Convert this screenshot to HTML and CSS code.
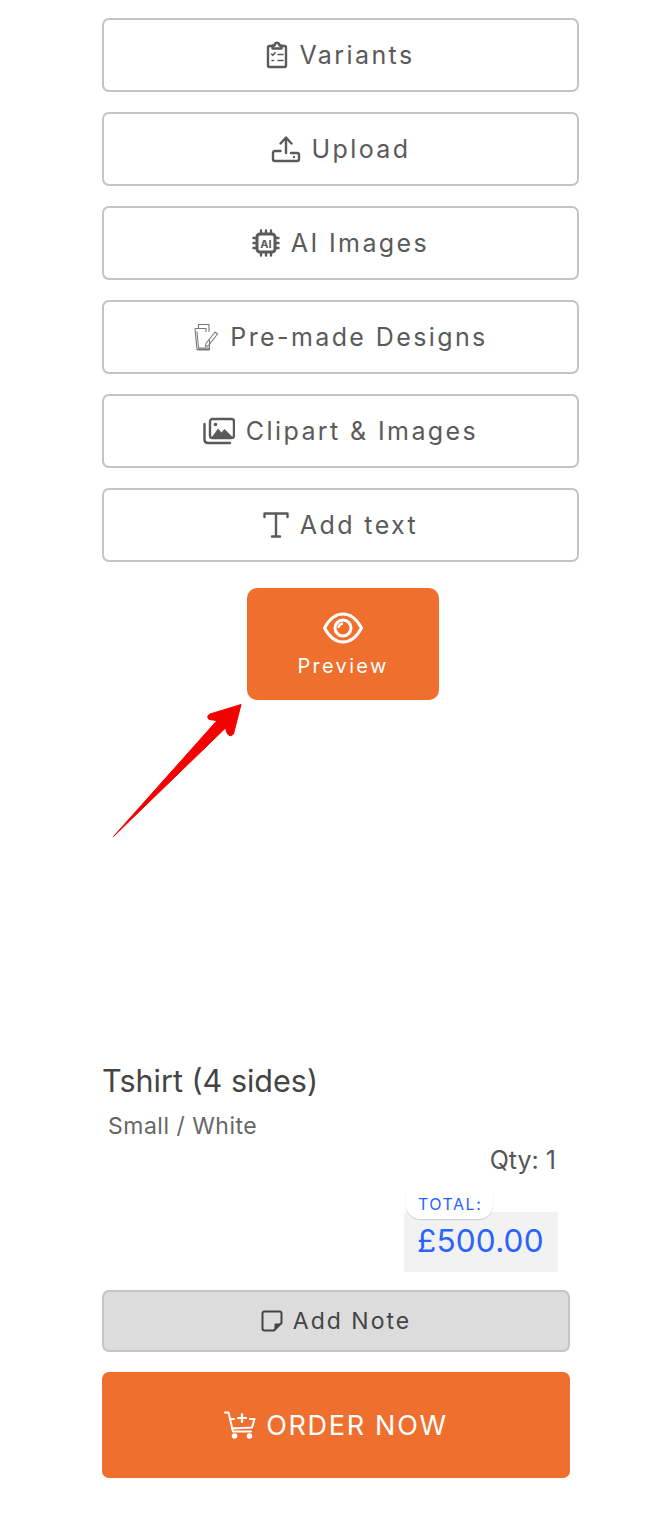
FILE: index.html
```html
<!DOCTYPE html>
<html lang="en">
<head>
<meta charset="utf-8">
<title>Product designer</title>
<link rel="stylesheet" href="styles.css">
</head>
<body>
<main class="page">
  <section class="tools">
    <button class="tool"><svg class="icon" viewBox="0 0 22 28" width="22" height="28" fill="none" stroke="currentColor" stroke-width="2.400" stroke-linejoin="round" stroke-linecap="round"><path d="M6.500 5H3.500Q2 5 2 6.500V24.500Q2 26 3.500 26H18.500Q20 26 20 24.500V6.500Q20 5 18.500 5H15.500"/><path d="M6.500 7.500V4.500H8.500Q9 1.800 11 1.800T13.500 4.500H15.500V7.500Z"/><g stroke-width="1.600"><path d="M5.500 13l1.300 1.300 2.200-2.400M12 13.500h5M12 19.500h5"/><path d="M6 19.500h1.500"/></g></svg><span>Variants</span></button>
    <button class="tool"><svg class="icon" viewBox="0 0 30 28" width="30" height="28" fill="none" stroke="currentColor" stroke-width="2.400" stroke-linecap="round" stroke-linejoin="round"><path d="M15 18V3M9.500 8.500 15 2.500l5.500 6"/><path d="M9.500 16H4Q2 16 2 18V24Q2 26 4 26H26Q28 26 28 24V20Q28 18 26 18H20"/><circle cx="23" cy="22" r="1.200" fill="currentColor" stroke="none"/></svg><span>Upload</span></button>
    <button class="tool"><svg class="icon" viewBox="0 0 28 28" width="28" height="28" fill="none" stroke="currentColor" stroke-width="2.400" stroke-linecap="round"><rect x="5" y="5" width="18" height="18" rx="3" stroke-width="3"/><path d="M9 1.500V4M14 1.500V4M19 1.500V4M9 24V26.500M14 24V26.500M19 24V26.500M1.500 9H4M1.500 14H4M1.500 19H4M24 9H26.500M24 14H26.500M24 19H26.500"/><text class="chip-label" x="14" y="18.500">AI</text></svg><span>AI Images</span></button>
    <button class="tool"><svg class="icon" viewBox="0 0 26 28" width="26" height="28" fill="none" stroke="#777" stroke-width="1.100" stroke-linejoin="round"><path d="M5.500 5V1.500H16V9"/><path d="M2 5.500H13V9"/><path d="M2 5.500 4 26.500H16.500V17"/><path d="M4 8.500 5.500 25H16" stroke-width="1"/><path d="M4.500 26.500H16.500" stroke-width="2"/><path d="M13 20.500 22 9l2.500 2-9 11.500-3 1z"/></svg><span>Pre-made Designs</span></button>
    <button class="tool"><svg class="icon" viewBox="0 0 32 28" width="32" height="28" fill="none" stroke="currentColor" stroke-width="2.400" stroke-linejoin="round" stroke-linecap="round"><rect x="7" y="2" width="24" height="19" rx="2.500"/><path d="M1.500 7V22.500Q1.500 26 5 26H27" /><path d="M9 20 15 11.500l3.500 4 3-3.500L29.500 20Z" fill="currentColor" stroke="none"/><circle cx="12.500" cy="7.500" r="1.800" fill="currentColor" stroke="none"/></svg><span>Clipart &amp; Images</span></button>
    <button class="tool"><svg class="icon" viewBox="0 0 26 28" width="26" height="28" fill="none" stroke="currentColor" stroke-width="2.400" stroke-linecap="round" stroke-linejoin="round"><path d="M1.500 6V2.500H24.500V6M13 2.500V25.500M9 25.500H17"/></svg><span>Add text</span></button>
  </section>

  <button class="preview">
    <svg viewBox="0 0 40 32" width="40" height="32" fill="none" stroke="currentColor" stroke-width="3"><path d="M1.500 16Q9 2 20 2T38.500 16Q31 30 20 30T1.500 16Z" stroke-linejoin="round"/><circle cx="20" cy="16" r="8"/><path d="M20 11.500A4.500 4.500 0 0 0 15.500 16" stroke-width="2.400"/></svg>
    <span>Preview</span>
  </button>

  <svg class="arrow" viewBox="0 0 140 145" width="140" height="145"><path d="M3.500 134.500 107 18.500 99 17.500Q96 14 100 12L131 2.500 123.500 32Q120 36 117 31L115.500 26Z" fill="#f50000" stroke="#f50000" stroke-width="1" stroke-linejoin="round"/></svg>

  <section class="product">
    <h1 class="product-title">Tshirt (4 sides)</h1>
    <p class="product-variant">Small / White</p>
    <p class="product-qty">Qty: 1</p>
    <div class="total">
      <span class="total-label">TOTAL:</span>
      <span class="total-price">£500.00</span>
    </div>
  </section>

  <section class="actions">
    <button class="note"><svg class="icon" viewBox="0 0 22 22" width="22" height="22" fill="none" stroke="currentColor" stroke-width="2" stroke-linejoin="round"><path d="M20.500 13V3.500Q20.500 1.500 18.500 1.500H3.500Q1.500 1.500 1.500 3.500V18.500Q1.500 20.500 3.500 20.500H13Z"/><path d="M20 14H14V20Z" fill="currentColor" stroke-width="1"/></svg><span>Add Note</span></button>
    <button class="order"><svg class="icon" viewBox="0 0 32 28" width="32" height="28" fill="none" stroke="currentColor" stroke-width="2" stroke-linecap="round" stroke-linejoin="round"><path d="M1 1.500H4.500L9 20.500H27"/><path d="M6 8H10M26 8H30.500L28 16.500 8 17.500"/><path d="M18 3V11M14 7H22" stroke-width="2.200"/><circle cx="10.500" cy="25" r="1.800" fill="currentColor"/><circle cx="25.500" cy="25" r="1.800" fill="currentColor"/></svg><span>ORDER NOW</span></button>
  </section>
</main>
</body>
</html>
```
FILE: styles.css
```css
* { box-sizing: border-box; }
html, body { margin: 0; background: #fff; }
body { font-family: "Inter", "Lato", sans-serif; color: #555; }
.page { position: relative; height: 1532px; padding: 18px 0 0 102px; }
button { font: inherit; cursor: pointer; }
p, h1 { margin: 0; }

.tools { display: flex; flex-direction: column; gap: 20px; width: 477px; }
.tool {
  height: 74px; display: flex; align-items: center; justify-content: center; gap: 11px;
  background: #fff; border: 2px solid #c4c4c4; border-radius: 7px;
  color: #5a5a5a; font-size: 25px; letter-spacing: 2.4px;
}
.icon { flex: none; }
.chip-label { fill: currentColor; stroke: none; font-size: 11px; font-weight: 700; letter-spacing: 0; text-anchor: middle; }

.preview {
  display: flex; flex-direction: column; align-items: center; gap: 10px;
  width: 192px; height: 112px; margin: 26px 0 0 145px; padding-top: 24px;
  background: #ef6f2e; border: 0; border-radius: 10px;
  color: #fff; font-size: 20px; letter-spacing: 2.300px;
}
.arrow { position: absolute; left: 110px; top: 702px; }

.product { width: 456px; margin-top: 361px; }
.product-title { font-size: 30.500px; font-weight: 400; line-height: 40px; color: #444; }
.product-variant { margin: 11px 0 0 6px; font-size: 23px; line-height: 28px; color: #666; letter-spacing: .5px; }
.product-qty { margin-top: 6px; padding-right: 2px; font-size: 25px; line-height: 28px; text-align: right; color: #555; }
.total { display: flex; flex-direction: column; width: 154px; margin: 16px 0 0 auto; position: relative; }
.total-label {
  align-self: flex-start; margin: 0 0 0 2px; width: 87px; height: 29px; padding: 2px 0 0 12px;
  background: #fff; border-radius: 0 0 14px 14px; box-shadow: 0 1px 1px #ccc;
  color: #2962ff; font-size: 16px; line-height: 24px; letter-spacing: 1.500px;
  position: relative; white-space: nowrap;
}
.total-price {
  height: 60px; margin-top: -7px; padding: 7px 0 0 13px;
  background: #f2f2f2; color: #2962ff; font-size: 31.500px; line-height: 44px; letter-spacing: .2px;
}

.actions { display: flex; flex-direction: column; gap: 20px; width: 468px; margin-top: 18px; }
.note, .order { display: flex; align-items: center; justify-content: center; gap: 10px; }
.note {
  height: 62px; background: #dcdcdc; border: 2px solid #c4c4c4; border-radius: 7px;
  color: #444; font-size: 23px; letter-spacing: 2px;
}
.order {
  height: 106px; background: #ef6f2e; border: 0; border-radius: 7px;
  color: #fff; font-size: 27px; letter-spacing: 1.700px;
}
```
